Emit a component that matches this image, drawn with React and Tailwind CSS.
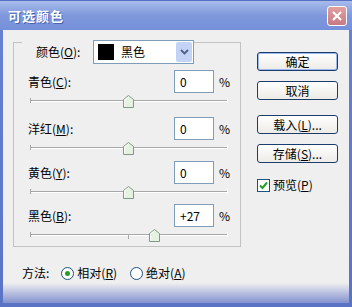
import React from 'react';

const font = { fontFamily: '"Noto Sans CJK SC", "Liberation Sans", sans-serif' };

const Thumb = () => (
  <svg width="11" height="13" viewBox="0 0 11 13" className="block">
    <path d="M0.5 12.5 V4.5 L5.5 0.5 L10.5 4.5 V12.5 Z" fill="#e4f2df" stroke="#7f9b85" />
    <path d="M1.5 11.5 V5 L5.5 1.8" fill="none" stroke="#ffffff" />
  </svg>
);

const Slider = ({ value, tick = false }) => {
  // track spans -100..100 over 196px, centre at 98px
  const left = 98 + Math.round((value / 100) * 98) - 5;
  return (
    <div className="relative h-[13px] w-[198px] ml-[16px]">
      <div className="absolute left-0 right-0 top-[5px] h-[2px] border-t border-[#a8a8a8] border-b border-b-white" />
      <div className="absolute left-0 top-[3px] w-px h-[5px] bg-[#a8a8a8]" />
      <div className="absolute right-0 top-[3px] w-px h-[5px] bg-white" />
      {tick && <div className="absolute left-[98px] top-[5px] w-px h-[5px] bg-[#a8a8a8]" />}
      <div className="absolute top-0" style={{ left }}>
        <Thumb />
      </div>
    </div>
  );
};

const Row = ({ label, k, value, num, mt, tick }) => (
  <div style={{ marginTop: mt }}>
    <div className="flex items-center h-[23px]">
      <span className="w-[160px] pl-[14px] text-[12px] text-black">
        {label}(<span className="underline">{k}</span>):
      </span>
      <div className="w-[40px] h-[23px] border border-[#7f9db9] bg-white text-[12px] pl-[5px] leading-[21px]">
        {value}
      </div>
      <span className="ml-[5px] text-[12px]">%</span>
    </div>
    <div className="mt-[2px]">
      <Slider value={num} tick={tick} />
    </div>
  </div>
);

const Btn = ({ children, primary }) => (
  <div
    className={`w-[81px] h-[19px] rounded-[3px] border border-[#1c3c6c] flex items-center justify-center text-[12px] text-black bg-gradient-to-b from-white to-[#ecebe6] ${
      primary ? 'shadow-[inset_0_0_0_1px_#9db8ec]' : ''
    }`}
  >
    {children}
  </div>
);

export default function App() {
  return (
    <div
      className="w-[352px] h-[307px] flex flex-col bg-gradient-to-b from-[#6683d3] to-[#5b73c4] overflow-hidden"
      style={font}
    >
      <div className="h-[30px] flex items-center justify-between pl-[8px] pr-[5px] bg-gradient-to-b from-[#a8bbea] via-[#7f98dc] to-[#7590da] border-t border-[#5571c6]">
        <span className="text-white text-[13px] font-bold tracking-[1px] [text-shadow:1px_1px_0_#4a62b0]">可选颜色</span>
        <div className="w-[20px] h-[20px] rounded-[3px] border border-white bg-gradient-to-b from-[#e2a0a0] to-[#c77a83] flex items-center justify-center">
          <svg width="12" height="12" viewBox="0 0 12 12">
            <path d="M2 2 L10 10 M10 2 L2 10" stroke="#fff" strokeWidth="2.2" />
          </svg>
        </div>
      </div>

      <div className="flex-1 mx-[3px] mb-[4px] bg-[#efefef] flex flex-col relative">
        <div className="flex">
          <div className="relative ml-[10px] mt-[12px] w-[228px] h-[205px] border border-[#c2c2c2]">
            <div className="absolute left-[8px] -top-[3px] flex items-center bg-[#efefef] pl-[14px]">
              <span className="text-[12px] w-[57px]">
                颜色(<span className="underline">O</span>):
              </span>
              <div className="w-[101px] h-[24px] border border-[#7f9db9] bg-white flex items-center pl-[4px]">
                <div className="w-[16px] h-[16px] bg-black" />
                <span className="ml-[7px] text-[12px]">黑色</span>
                <div className="ml-auto mr-[1px] w-[16px] h-[20px] bg-[#c3d3f6] rounded-[2px] flex items-center justify-center">
                  <svg width="9" height="6" viewBox="0 0 9 6">
                    <path d="M1 1 L4.5 4.5 L8 1" fill="none" stroke="#4d6185" strokeWidth="1.8" />
                  </svg>
                </div>
              </div>
            </div>
            <Row label="青色" k="C" value="0" num={0} mt={27} />
            <Row label="洋红" k="M" value="0" num={0} mt={9} />
            <Row label="黄色" k="Y" value="0" num={0} mt={6} />
            <Row label="黑色" k="B" value="+27" num={27} mt={5} tick />
          </div>

          <div className="ml-[16px] mt-[22px] flex flex-col">
            <Btn primary>确定</Btn>
            <div className="mt-[10px]"><Btn>取消</Btn></div>
            <div className="mt-[15px]"><Btn>载入(<span className="underline">L</span>)...</Btn></div>
            <div className="mt-[10px]"><Btn>存储(<span className="underline">S</span>)...</Btn></div>
            <div className="mt-[13px] flex items-center">
              <div className="w-[13px] h-[13px] border border-[#1c5180] bg-white flex items-center justify-center">
                <svg width="9" height="9" viewBox="0 0 9 9">
                  <path d="M1 4.5 L3.5 7 L8 1.5" fill="none" stroke="#21a121" strokeWidth="2" />
                </svg>
              </div>
              <span className="ml-[3px] text-[12px]">预览(<span className="underline">P</span>)</span>
            </div>
          </div>
        </div>

        <div className="flex items-center mt-[17px] ml-[19px] text-[12px]">
          <span>方法:</span>
          <div className="ml-[12px] w-[13px] h-[13px] rounded-full border border-[#1c5180] bg-white flex items-center justify-center">
            <div className="w-[5px] h-[5px] rounded-full bg-[#21a121]" />
          </div>
          <span className="ml-[3px]">相对(<span className="underline">R</span>)</span>
          <div className="ml-[13px] w-[13px] h-[13px] rounded-full border border-[#1c5180] bg-white" />
          <span className="ml-[3px]">绝对(<span className="underline">A</span>)</span>
        </div>

        <div className="mt-auto h-[20px] bg-gradient-to-b from-[#efefef] to-[#8592cf]" />
      </div>
    </div>
  );
}
